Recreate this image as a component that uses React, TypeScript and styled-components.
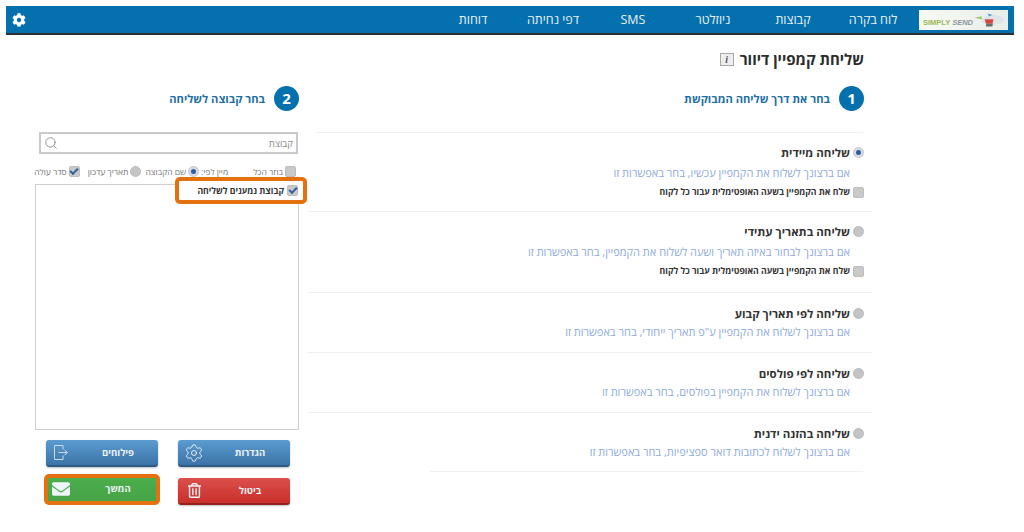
import * as React from "react";
import styled, { createGlobalStyle } from "styled-components";
import { FaCog, FaEnvelope, FaRegTrashAlt } from "react-icons/fa";
import { Search, Settings } from "lucide-react";

const GlobalStyle = createGlobalStyle`
  html, body {
    margin: 0;
    padding: 0;
    background: #fff;
  }
  body {
    font-family: "Open Sans", "Liberation Sans", "DejaVu Sans", sans-serif;
  }
`;

const Page = styled.div`
  width: 1024px;
  height: 532px;
  overflow: hidden;
  box-sizing: border-box;
  padding-top: 6px;
`;

const NavBar = styled.nav`
  width: 1008px;
  height: 29px;
  margin: 0 10px 0 6px;
  box-sizing: border-box;
  background: #0470ae;
  border-bottom: 2px solid #2c3136;
  display: flex;
  align-items: center;
  padding: 0 6px;
`;

const Logo = styled.div`
  width: 89px;
  height: 20px;
  background: linear-gradient(90deg, #f7f9f3, #e9eeea);
  display: flex;
  align-items: center;
  justify-content: space-between;
  padding: 0 3px 0 4px;
  box-sizing: border-box;
  direction: ltr;
  order: 2;
`;

const LogoText = styled.span`
  font-family: "Liberation Sans", sans-serif;
  font-size: 7.5px;
  font-weight: 700;
  color: #9bb955;
  padding-top: 6px;
  white-space: nowrap;
  & em {
    color: #8d959b;
  }
`;

const NavLinks = styled.div`
  display: flex;
  align-items: center;
  margin-right: 6px;
  margin-left: auto;
  order: 1;
`;

const NavLink = styled.span`
  width: 80px;
  text-align: center;
  color: #e8f2f8;
  font-size: 12.5px;
  line-height: 16px;
`;

const Cog = styled(FaCog)`
  color: #fff;
  font-size: 14px;
  order: 0;
`;

const TopRow = styled.div`
  display: flex;
  align-items: center;
  gap: 6px;
  padding: 14px 160px 0 0;
  height: 20px;
`;

const Title = styled.h1`
  margin: 0;
  font-size: 15px;
  font-weight: 700;
  color: #2d2d2d;
`;

const InfoBox = styled.span`
  width: 12px;
  height: 11px;
  border: 1px solid #a8a8a8;
  background: #eeeeee;
  color: #555;
  font: italic 700 10px/11px "Liberation Serif", serif;
  text-align: center;
`;

const Columns = styled.div`
  display: grid;
  grid-template-columns: 564px 265px;
  column-gap: 9px;
  padding: 17px 152px 0 0;
`;

const Column = styled.section``;

const StepHeader = styled.div<{ $inset: number }>`
  display: flex;
  align-items: center;
  gap: 9px;
  height: 24px;
  padding-right: ${props => props.$inset}px;
`;

const StepBadge = styled.span`
  width: 25px;
  height: 25px;
  border-radius: 50%;
  background: #0470ae;
  color: #fff;
  font-size: 15px;
  font-weight: 700;
  display: flex;
  align-items: center;
  justify-content: center;
`;

const StepTitle = styled.span`
  color: #1f6fa6;
  font-size: 11.2px;
  font-weight: 700;
`;

const Methods = styled.div`
  margin-top: 22px;
`;

const Rule = styled.div<{ $left: number }>`
  height: 1px;
  background: #f1f1f1;
  margin: 0 9px 0 0;
  margin-left: ${props => props.$left}px;
`;

const Method = styled.div<{ $height: number; $last?: boolean; $compact?: boolean }>`
  height: ${props => props.$height}px;
  box-sizing: border-box;
  border-bottom: ${props => (props.$last ? "0" : "1px solid #f0f0f0")};
  padding: ${props => (props.$compact ? 11 : 10)}px 8px 0 0;
`;

const MethodHead = styled.div`
  display: flex;
  align-items: center;
  gap: 3px;
  height: 18px;
`;

const Radio = styled.span<{ $on?: boolean }>`
  flex: none;
  width: 11px;
  height: 11px;
  border-radius: 50%;
  background: ${props => (props.$on ? "#d8dbe2" : "#c4c4c4")};
  border: 1px solid ${props => (props.$on ? "#c4c7cf" : "#bcbcbc")};
  box-sizing: border-box;
  display: flex;
  align-items: center;
  justify-content: center;
  &::after {
    content: "";
    display: ${props => (props.$on ? "block" : "none")};
    width: 5px;
    height: 5px;
    border-radius: 50%;
    background: #2f5ea8;
  }
`;

const MethodTitle = styled.span`
  font-size: 11.5px;
  font-weight: 700;
  color: #333;
`;

const MethodDesc = styled.div<{ $compact?: boolean }>`
  font-size: 11px;
  line-height: 18px;
  margin-top: ${props => (props.$compact ? 1 : 3)}px;
  padding-right: 14px;
  color: #8eaadb;
`;

const CheckRow = styled.label`
  display: flex;
  align-items: center;
  gap: 3px;
  height: 14px;
  margin-top: 3px;
  font-size: 8.7px;
  font-weight: 700;
  color: #333;
`;

const Box = styled.span<{ $checked?: boolean }>`
  flex: none;
  width: 9px;
  height: 9px;
  border: 1px solid #bdbdbd;
  border-radius: 2px;
  background: #c9c9c9;
  display: flex;
  align-items: center;
  justify-content: center;
  &::after {
    content: "";
    display: ${props => (props.$checked ? "block" : "none")};
    width: 6px;
    height: 3px;
    margin-top: -2px;
    border-left: 2px solid #2d5f9e;
    border-bottom: 2px solid #2d5f9e;
    transform: rotate(-45deg);
  }
`;

const SearchBox = styled.div`
  margin: 22px 1px 0 1px;
  width: 259px;
  height: 22px;
  border: 2px solid #c9c9c9;
  box-sizing: border-box;
  display: flex;
  align-items: center;
  justify-content: space-between;
  padding: 0 3px 0 3px;
  color: #8a8a8a;
  font-size: 9.5px;
`;

const SearchIcon = styled(Search)`
  color: #777;
`;

const SortRow = styled.div`
  display: flex;
  align-items: center;
  height: 14px;
  margin-top: 10px;
  padding-right: 3px;
  font-size: 8.5px;
  color: #777;
`;

const SortLabel = styled.span<{ $gap?: number }>`
  display: flex;
  align-items: center;
  gap: 2px;
  margin-left: ${props => props.$gap || 0}px;
  white-space: nowrap;
`;

const ListBox = styled.div`
  width: 264px;
  height: 246px;
  margin-top: 6px;
  box-sizing: border-box;
  border: 1px solid #cfcfcf;
`;

const ListItem = styled.div`
  width: fit-content;
  height: 19px;
  margin: -4px -5px 0 0;
  box-sizing: border-box;
  display: flex;
  align-items: center;
  gap: 3px;
  padding: 0 5px 0 18px;
  outline: 4px solid #e5700f;
  border-radius: 1px;
  background: #fff;
  font-size: 8.7px;
  font-weight: 700;
  color: #333;
  position: relative;
`;

const Buttons = styled.div`
  display: grid;
  grid-template-columns: 112px 112px;
  column-gap: 20px;
  row-gap: 11px;
  margin: 10px 9px 0 0;
`;

const ActionButton = styled.button<{
  $color: string;
  $dark: string;
  $edge: string;
  $iconInset: number;
  $marked?: boolean;
}>`
  height: 27px;
  margin-top: ${props => (props.$marked ? "-2px" : "0")};
  border: 0;
  border-bottom: 2px solid ${props => props.$edge};
  border-radius: 3px;
  background: linear-gradient(${props => props.$color}, ${props => props.$dark});
  color: #eef4f8;
  font: 700 9.5px "Open Sans", "Liberation Sans", sans-serif;
  display: flex;
  align-items: center;
  justify-content: space-between;
  padding: 0 10px 0 ${props => props.$iconInset}px;
  box-shadow: 0 1px 2px rgba(0, 0, 0, 0.25);
  outline: ${props => (props.$marked ? "4px solid #e5700f" : "none")};
  outline-offset: ${props => (props.$marked ? "-2px" : "0")};
`;

const ButtonLabel = styled.span`
  width: 60px;
  text-align: center;
`;

const MethodItem = ({ height, title, desc, on, optimal, last }: {
  height: number;
  title: string;
  desc: string;
  on?: boolean;
  optimal?: boolean;
  last?: boolean;
}) => (
  <Method $height={height} $last={last} $compact={!optimal}>
    <MethodHead>
      <Radio $on={on} />
      <MethodTitle>{title}</MethodTitle>
    </MethodHead>
    <MethodDesc $compact={!optimal}>{desc}</MethodDesc>
    {optimal && (
      <CheckRow>
        <Box />
        שלח את הקמפיין בשעה האופטימלית עבור כל לקוח
      </CheckRow>
    )}
  </Method>
);

const ExportIcon = () => (
  <svg width="14" height="15" viewBox="0 0 14 15" fill="none" stroke="#c9dbe9" strokeWidth="1">
    <path d="M9 4.5V0.5H0.5V14.5H9V10.5" />
    <path d="M4.5 7.5H13M10.5 5L13.5 7.5L10.5 10" />
  </svg>
);

const LogoCart = () => (
  <svg width="44" height="20" viewBox="0 0 44 20">
    <ellipse cx="27" cy="10" rx="16" ry="7" fill="#dfe4e6" />
    <path d="M2 7L12 5V9Z" fill="#9fc46b" />
    <path d="M20 1L27 3L22 5Z" fill="#4a9ad8" />
    <path d="M16 9H28L27 15H18Z" fill="#d9473f" />
    <path d="M18 15H27V19H18Z" fill="#6b6f72" />
  </svg>
);

export default function App() {
  return (
    <Page dir="rtl">
      <GlobalStyle />
      <NavBar dir="ltr">
        <Cog />
        <NavLinks dir="rtl">
          <NavLink>לוח בקרה</NavLink>
          <NavLink>קבוצות</NavLink>
          <NavLink>ניוזלטר</NavLink>
          <NavLink>SMS</NavLink>
          <NavLink>דפי נחיתה</NavLink>
          <NavLink>דוחות</NavLink>
        </NavLinks>
        <Logo>
          <LogoText>
            SIMPLY <em>SEND</em>
          </LogoText>
          <LogoCart />
        </Logo>
      </NavBar>

      <TopRow>
        <Title>שליחת קמפיין דיוור</Title>
        <InfoBox>i</InfoBox>
      </TopRow>

      <Columns>
        <Column>
          <StepHeader $inset={8}>
            <StepBadge>1</StepBadge>
            <StepTitle>בחר את דרך שליחה המבוקשת</StepTitle>
          </StepHeader>
          <Methods>
            <Rule $left={9} />
            <MethodItem
              height={79}
              on
              optimal
              title="שליחה מיידית"
              desc="אם ברצונך לשלוח את הקמפיין עכשיו, בחר באפשרות זו"
            />
            <MethodItem
              height={81}
              optimal
              title="שליחה בתאריך עתידי"
              desc="אם ברצונך לבחור באיזה תאריך ושעה לשלוח את הקמפיין, בחר באפשרות זו"
            />
            <MethodItem
              height={60}
              title="שליחה לפי תאריך קבוע"
              desc='אם ברצונך לשלוח את הקמפיין ע"פ תאריך ייחודי, בחר באפשרות זו'
            />
            <MethodItem
              height={60}
              title="שליחה לפי פולסים"
              desc="אם ברצונך לשלוח את הקמפיין בפולסים, בחר באפשרות זו"
            />
            <MethodItem
              height={58}
              last
              title="שליחה בהזנה ידנית"
              desc="אם ברצונך לשלוח לכתובות דואר ספציפיות, בחר באפשרות זו"
            />
            <Rule $left={122} />
          </Methods>
        </Column>

        <Column>
          <StepHeader $inset={0}>
            <StepBadge>2</StepBadge>
            <StepTitle>בחר קבוצה לשליחה</StepTitle>
          </StepHeader>
          <SearchBox>
            <span>קבוצת</span>
            <SearchIcon size={14} strokeWidth={1.3} />
          </SearchBox>
          <SortRow>
            <SortLabel $gap={25}>
              <Box />
              בחר הכל
            </SortLabel>
            <SortLabel $gap={2}>מיין לפי:</SortLabel>
            <SortLabel $gap={4}>
              <Radio $on />
              שם הקבוצה
            </SortLabel>
            <SortLabel $gap={8}>
              <Radio />
              תאריך עדכון
            </SortLabel>
            <SortLabel>
              <Box $checked />
              סדר עולה
            </SortLabel>
          </SortRow>
          <ListBox>
            <ListItem>
              <Box $checked />
              קבוצת נמענים לשליחה
            </ListItem>
          </ListBox>
          <Buttons>
            <ActionButton $color="#5b9bd1" $dark="#3c74a6" $edge="#2d5a84" $iconInset={6}>
              <ButtonLabel>הגדרות</ButtonLabel>
              <Settings size={20} strokeWidth={1.1} />
            </ActionButton>
            <ActionButton $color="#5b9bd1" $dark="#3c74a6" $edge="#2d5a84" $iconInset={8}>
              <ButtonLabel>פילוחים</ButtonLabel>
              <ExportIcon />
            </ActionButton>
            <ActionButton $color="#dc4f4b" $dark="#c9302c" $edge="#96201d" $iconInset={9}>
              <ButtonLabel>ביטול</ButtonLabel>
              <FaRegTrashAlt size={15} />
            </ActionButton>
            <ActionButton $color="#4cae4c" $dark="#46a546" $edge="#3c8f3c" $iconInset={6} $marked>
              <ButtonLabel>המשך</ButtonLabel>
              <FaEnvelope size={18} />
            </ActionButton>
          </Buttons>
        </Column>
      </Columns>
    </Page>
  );
}
